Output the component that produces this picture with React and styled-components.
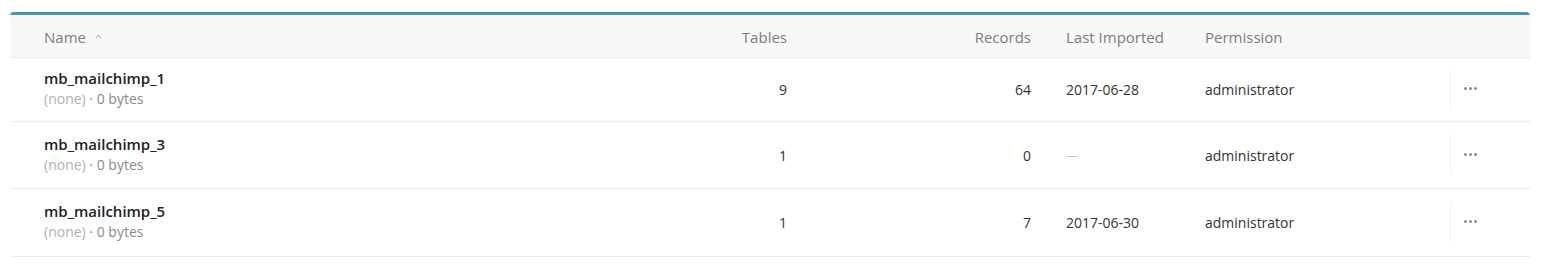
import React from "react";
import styled, { createGlobalStyle } from "styled-components";

const GlobalStyle = createGlobalStyle`
  body {
    margin: 0;
    background: #fff;
    font-family: "Open Sans", "Liberation Sans", sans-serif;
    -webkit-font-smoothing: antialiased;
  }
`;

const Page = styled.div`
  width: 1542px;
  height: 276px;
  padding: 12px 12px 0 10px;
  box-sizing: border-box;
`;

const Table = styled.div`
  width: 1520px;
  border-top: 3px solid #4b91b8;
  border-radius: 4px 4px 0 0;
`;

const COLUMNS = "707px 70px 244px 174px 245px 80px";

const HeaderRow = styled.div`
  display: grid;
  grid-template-columns: ${COLUMNS};
  align-items: center;
  height: 43px;
  padding-top: 2px;
  box-sizing: border-box;
  background: #f8f8f8;
  border-bottom: 1px solid #ececec;
  font-size: 15px;
  color: #7c7c7c;
`;

const Row = styled.div`
  display: grid;
  grid-template-columns: ${COLUMNS};
  align-items: center;
  height: ${({ $h }) => $h}px;
  box-sizing: border-box;
  border-bottom: 1px solid #ececec;
  font-size: 14px;
  color: #333;
`;

const Cell = styled.div`
  text-align: ${({ $right }) => ($right ? "right" : "left")};
  padding-left: ${({ $pl }) => $pl || 0}px;
  white-space: nowrap;
`;

const SortCaret = styled.svg`
  width: 7px;
  height: 5px;
  margin-left: 9px;
  vertical-align: middle;
  position: relative;
  top: -2px;
`;

const NameCell = styled.div`
  padding-left: 34px;
  display: flex;
  flex-direction: column;
  gap: 1px;
  margin-top: -3px;
`;

const DbName = styled.div`
  font-weight: 600;
  font-size: 15px;
  color: #222;
`;

const Meta = styled.div`
  font-size: 14px;
  color: #b0b0b0;
  span {
    color: #8a8a8a;
  }
`;

const Dash = styled.span`
  display: inline-block;
  width: 12px;
  height: 1px;
  background: #c8c8c8;
  vertical-align: middle;
`;

const ActionCell = styled.div`
  height: 40px;
  border-left: 1px solid #f0f0f0;
  display: flex;
  align-items: center;
  padding-left: 13px;
  margin-top: -2px;
`;

const Dots = styled.div`
  display: flex;
  gap: 2px;
  i {
    width: 3px;
    height: 3px;
    border-radius: 50%;
    background: #8a8a8a;
  }
`;

const rows = [
  { name: "mb_mailchimp_1", tables: 9, records: 64, imported: "2017-06-28", h: 64 },
  { name: "mb_mailchimp_3", tables: 1, records: 0, imported: null, h: 67 },
  { name: "mb_mailchimp_5", tables: 1, records: 7, imported: "2017-06-30", h: 68 },
];

export default function App() {
  return (
    <>
      <GlobalStyle />
      <Page>
        <Table>
          <HeaderRow>
            <Cell $pl={34}>
              Name
              <SortCaret viewBox="0 0 7 5">
                <path d="M0.8 4.2 L3.5 1.2 L6.2 4.2" fill="none" stroke="#9a9a9a" strokeWidth="1" />
              </SortCaret>
            </Cell>
            <Cell $right>Tables</Cell>
            <Cell $right>Records</Cell>
            <Cell $pl={35}>Last Imported</Cell>
            <Cell>Permission</Cell>
            <Cell />
          </HeaderRow>
          {rows.map((r) => (
            <Row key={r.name} $h={r.h}>
              <NameCell>
                <DbName>{r.name}</DbName>
                <Meta>
                  (none) <span>· 0 bytes</span>
                </Meta>
              </NameCell>
              <Cell $right>{r.tables}</Cell>
              <Cell $right>{r.records}</Cell>
              <Cell $pl={35}>{r.imported || <Dash />}</Cell>
              <Cell>administrator</Cell>
              <ActionCell>
                <Dots>
                  <i />
                  <i />
                  <i />
                </Dots>
              </ActionCell>
            </Row>
          ))}
        </Table>
      </Page>
    </>
  );
}
